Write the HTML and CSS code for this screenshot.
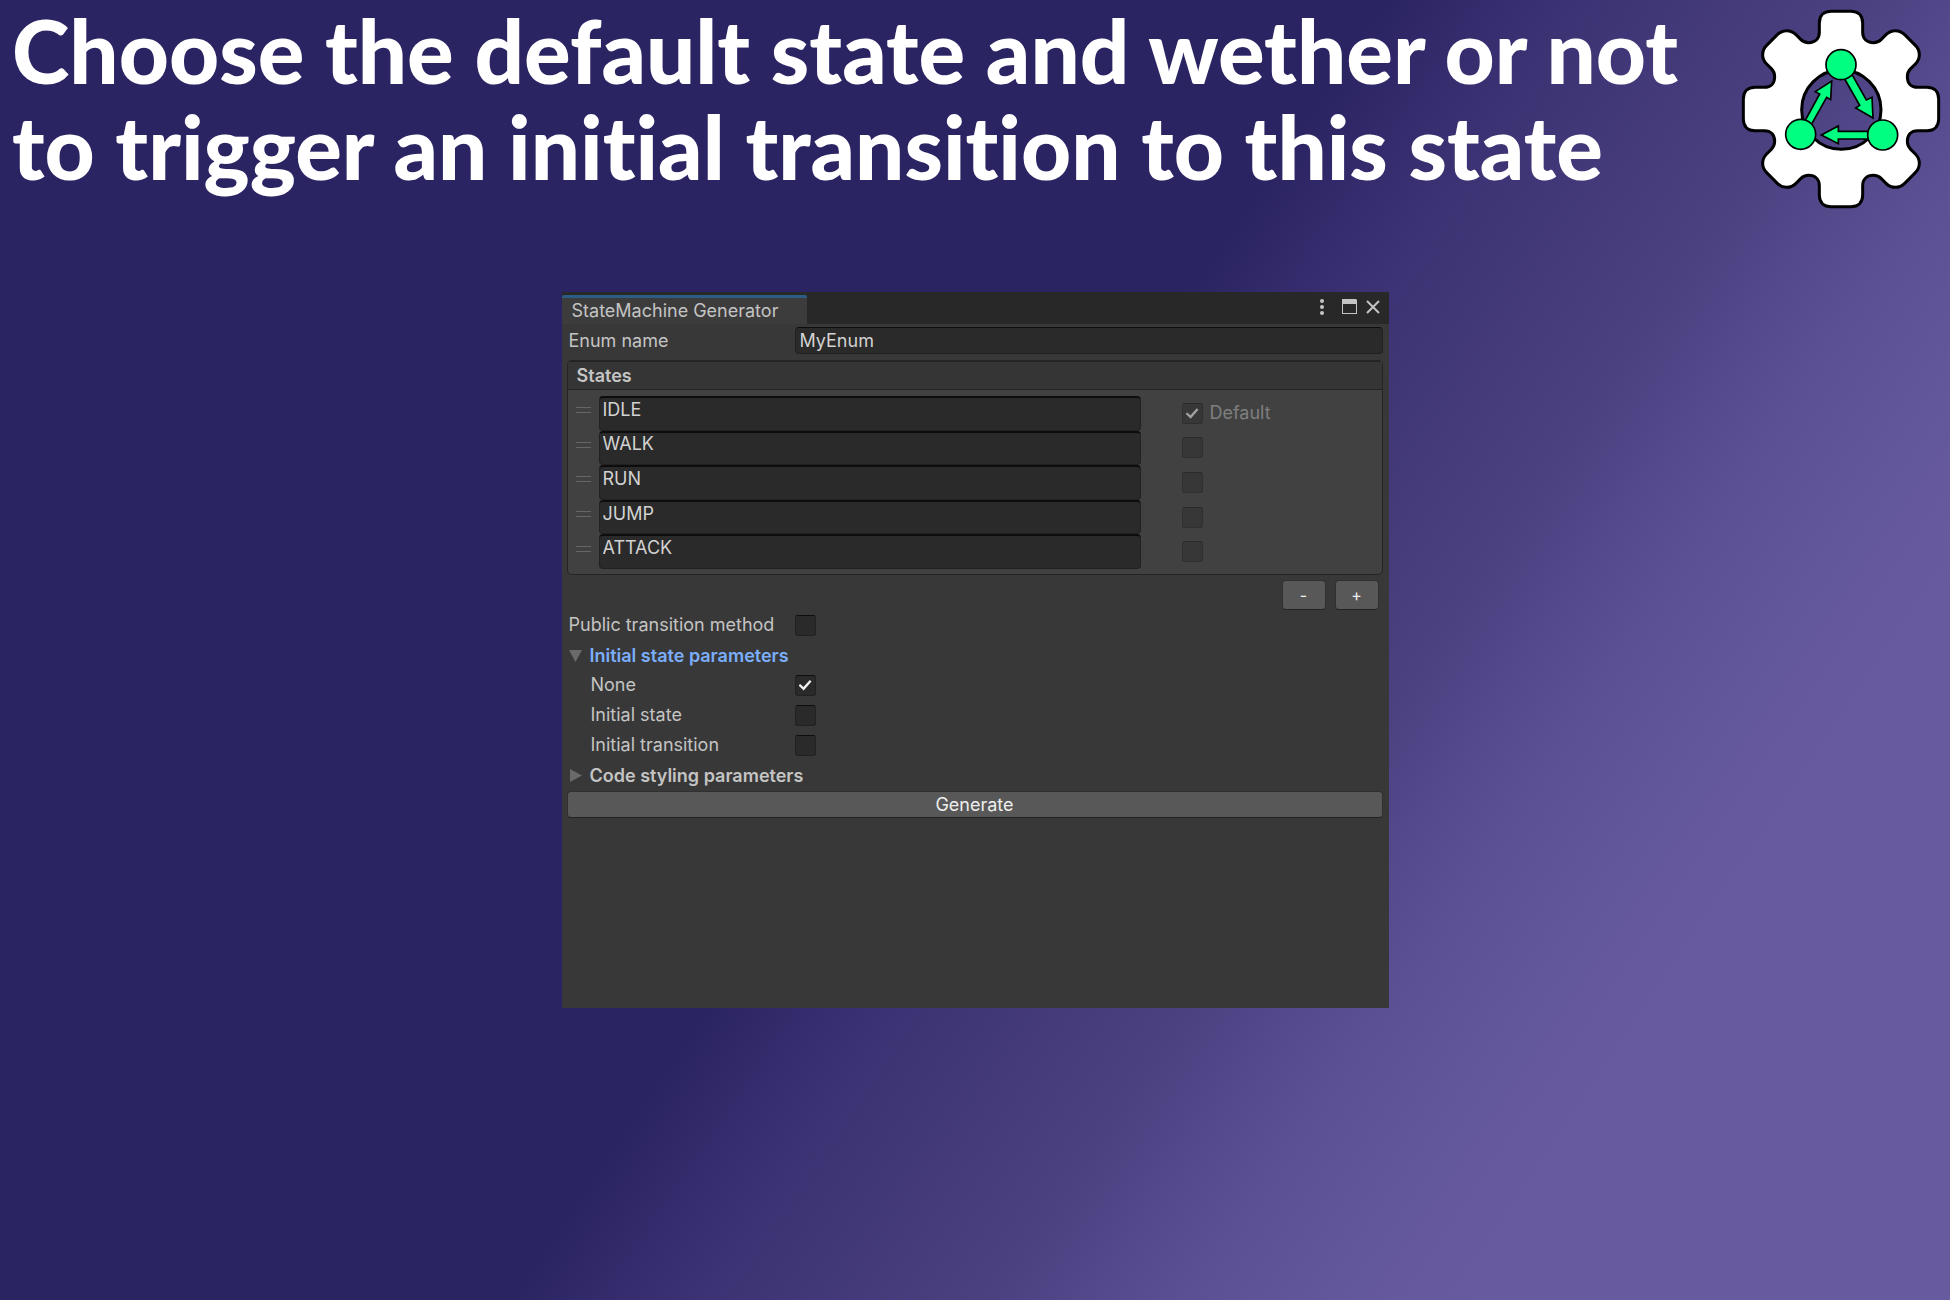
FILE: index.html
```html
<!DOCTYPE html>
<html lang="en">
<head>
<meta charset="utf-8">
<meta name="viewport" content="width=device-width, initial-scale=1">
<title>StateMachine Generator</title>
<link rel="stylesheet" href="styles.css">
</head>
<body>
<header class="banner">
  <h1 class="headline">Choose the default state and wether or not<br>to trigger an initial transition to this state</h1>
  <svg class="logo" viewBox="61 28 600 600" role="img" aria-label="State machine logo">
    <path class="gear" fill-rule="evenodd" d="M331 35h60c22 0 35 13 35 35v28c0 20 13 31 32 31c10 0 18-4 24-10l14-14c16-16 40-16 56 0l32 32c16 16 16 40 0 56l-14 14c-6 6-10 14-10 24c0 19 11 32 31 32h28c22 0 35 13 35 35v60c0 22-13 35-35 35h-28c-20 0-31 13-31 32c0 10 4 18 10 24l14 14c16 16 16 40 0 56l-32 32c-16 16-40 16-56 0l-14-14c-6-6-14-10-24-10c-19 0-32 11-32 31v28c0 22-13 35-35 35h-60c-22 0-35-13-35-35v-28c0-20-13-31-32-31c-10 0-18 4-24 10l-14 14c-16 16-40 16-56 0l-32-32c-16-16-16-40 0-56l14-14c6-6 10-14 10-24c0-19-11-32-31-32h-28c-22 0-35-13-35-35v-60c0-22 13-35 35-35h28c20 0 31-13 31-32c0-10-4-18-10-24l-14-14c-16-16-16-40 0-56l32-32c16-16 40-16 56 0l14 14c6 6 14 10 24 10c19 0 32-11 32-31v-28c0-22 13-35 35-35zM243 330a119 119 0 1 0 238 0a119 119 0 1 0-238 0z"/>
    <g class="graph">
      <path d="M372 238L395 226L437 301L454 293L457 355L405 325L417 317z"/>
      <path d="M252 365L297 283L284 276L333 244L330 300L318 293L270 378z"/>
      <path d="M446 395H353V379L302 406L353 432V418H446z"/>
      <circle cx="361" cy="195" r="45"/>
      <circle cx="240" cy="404" r="45"/>
      <circle cx="486" cy="406" r="45"/>
    </g>
  </svg>
</header>

<main class="window">
  <div class="titlebar">
    <h2 class="tab">StateMachine Generator</h2>
    <div class="window-controls">
      <button class="icon-button" type="button" aria-label="Menu"><svg width="16" height="16" viewBox="0 0 16 16"><circle cx="8" cy="2" r="2"/><circle cx="8" cy="8" r="2"/><circle cx="8" cy="14" r="2"/></svg></button>
      <button class="icon-button" type="button" aria-label="Maximize"><svg width="16" height="16" viewBox="0 0 16 16"><path fill-rule="evenodd" d="M1 0h14l1 1v14H1V0zM2 5v9h13V5z"/></svg></button>
      <button class="icon-button" type="button" aria-label="Close"><svg width="16" height="16" viewBox="0 0 16 16"><path class="cross" d="M2 2L14 14M14 2L2 14"/></svg></button>
    </div>
  </div>

  <form class="panel">
    <div class="field">
      <label class="field-label" for="enum-name">Enum name</label>
      <input class="text-input" id="enum-name" type="text" value="MyEnum">
    </div>

    <section class="states">
      <h3 class="states-title">States</h3>
      <ul class="state-list">
        <li class="state"><span class="handle"></span><input class="text-input state-input" type="text" value="IDLE" aria-label="State 1"><label class="default-toggle"><input class="check" type="checkbox" checked disabled>Default</label></li>
        <li class="state"><span class="handle"></span><input class="text-input state-input" type="text" value="WALK" aria-label="State 2"><input class="check" type="checkbox" aria-label="Default state 2" disabled></li>
        <li class="state"><span class="handle"></span><input class="text-input state-input" type="text" value="RUN" aria-label="State 3"><input class="check" type="checkbox" aria-label="Default state 3" disabled></li>
        <li class="state"><span class="handle"></span><input class="text-input state-input" type="text" value="JUMP" aria-label="State 4"><input class="check" type="checkbox" aria-label="Default state 4" disabled></li>
        <li class="state"><span class="handle"></span><input class="text-input state-input" type="text" value="ATTACK" aria-label="State 5"><input class="check" type="checkbox" aria-label="Default state 5" disabled></li>
      </ul>
    </section>

    <div class="list-actions">
      <button class="button small" type="button">-</button>
      <button class="button small" type="button">+</button>
    </div>

    <div class="field">
      <label class="field-label" for="public-method">Public transition method</label>
      <input class="check" id="public-method" type="checkbox">
    </div>

    <details class="foldout" open>
      <summary class="summary active"><svg class="arrow" width="14" height="14" viewBox="0 0 14 14"><path d="M0 1H13L6.500 13z"/></svg>Initial state parameters</summary>
      <div class="field nested">
        <label class="field-label" for="none">None</label>
        <input class="check" id="none" type="checkbox" checked>
      </div>
      <div class="field nested">
        <label class="field-label" for="initial-state">Initial state</label>
        <input class="check" id="initial-state" type="checkbox">
      </div>
      <div class="field nested">
        <label class="field-label" for="initial-transition">Initial transition</label>
        <input class="check" id="initial-transition" type="checkbox">
      </div>
    </details>

    <details class="foldout">
      <summary class="summary"><svg class="arrow" width="14" height="14" viewBox="0 0 14 14"><path d="M1 0V13L13 6.500z"/></svg>Code styling parameters</summary>
    </details>

    <button class="button generate" type="button">Generate</button>
  </form>
</main>
</body>
</html>
```
FILE: styles.css
```css
* {
  box-sizing: border-box;
}

body {
  margin: 0;
  min-height: 100vh;
  font: 18px/22px Inter, "Liberation Sans", sans-serif;
  font-optical-sizing: none;
  color: #c4c4c4;
  background: linear-gradient(124deg, #2b2463 49%, #3c3374 56%, #4b4181 66%, #5b5094 73%, #63579b 78%, #685a9e 83%);
}

.banner {
  display: flex;
  justify-content: space-between;
  align-items: flex-start;
  padding: 3px 9px 0 12px;
}

.headline {
  margin: 0;
  font: 900 87px/96px Lato, "Open Sans", sans-serif;
  font-variant-ligatures: none;
  color: #fff;
  white-space: nowrap;
}

.logo {
  flex: none;
  width: 200px;
  height: 200px;
  margin-top: 6px;
}

.gear {
  fill: #fff;
  stroke: #000;
  stroke-width: 9;
}

.graph {
  fill: #00ff80;
  stroke: #000;
  stroke-width: 5;
}

.window {
  width: 827px;
  min-height: 716px;
  margin: 83px auto 0;
  background: #383838;
}

.titlebar {
  display: flex;
  justify-content: space-between;
  height: 32px;
  padding-top: 3px;
  background: #282828;
}

.tab {
  margin: 0;
  width: 245px;
  padding: 2px 10px;
  border-top: 3px solid #2c5d87;
  border-radius: 2px 2px 0 0;
  background: #3c3c3c;
  font-size: 18px;
  font-weight: 400;
  white-space: nowrap;
}

.window-controls {
  display: flex;
  align-items: flex-start;
  gap: 8px;
  padding: 4px 8px 0 0;
}

.icon-button {
  display: block;
  width: 16px;
  height: 16px;
  padding: 0;
  border: 0;
  background: none;
  fill: #c4c4c4;
}

.icon-button:first-child {
  margin-right: 3px;
}

.icon-button svg {
  display: block;
}

.cross {
  stroke: #c4c4c4;
  stroke-width: 2;
}

.panel {
  padding: 3px 6px 0 5px;
}

.field {
  display: flex;
  align-items: center;
  height: 30px;
  padding-left: 2px;
}

.field:first-child {
  height: 27px;
}

.field-label {
  width: 226px;
}

.nested {
  padding-left: 24px;
}

.nested .field-label {
  width: 204px;
}

.text-input {
  flex: 1;
  min-width: 0;
  height: 27px;
  padding: 0 4px 1px;
  border: 1px solid #212121;
  border-top-color: #0d0d0d;
  border-radius: 4px;
  background: #2a2a2a;
  color: #d2d2d2;
  font: inherit;
}

.states {
  margin-top: 6px;
  border: 1px solid #242424;
  border-top-width: 2px;
  border-radius: 5px;
  background: #414141;
}

.states-title {
  margin: 0;
  padding: 3px 9px 2px;
  border-bottom: 1px solid #242424;
  background: #353535;
  font-size: 18px;
  line-height: 22px;
  font-weight: 600;
}

.state-list {
  display: grid;
  grid-template-rows: repeat(5, 1fr);
  height: 184px;
  margin: 0;
  padding: 6px 0 5px 8px;
  list-style: none;
}

.state {
  display: grid;
  grid-template-columns: 23px 542px 1fr;
  align-items: center;
}

.handle {
  width: 15px;
  height: 6px;
  margin-bottom: 6px;
  border-top: 1px solid #666;
  border-bottom: 1px solid #666;
}

.state-input {
  height: 100%;
  padding: 0 3px 9px;
  border-top-width: 2px;
}

.state > .check,
.default-toggle {
  margin-left: 41px;
}

.default-toggle {
  display: flex;
  align-items: center;
  gap: 7px;
  color: #7f7f7f;
}

.check {
  appearance: none;
  display: grid;
  place-items: center;
  width: 21px;
  height: 21px;
  margin: 0;
  border: 1px solid #212121;
  border-top-color: #0d0d0d;
  border-radius: 3px;
  background: #2a2a2a;
  color: #f0f0f0;
}

.check:checked::before {
  content: "";
  width: 13px;
  height: 11px;
  background: currentColor;
  clip-path: polygon(0 55%, 13% 42%, 38% 68%, 87% 5%, 100% 18%, 40% 100%);
}

.check:disabled {
  border-color: #303030;
  border-top-color: #2a2a2a;
  background: #373737;
  color: #a0a0a0;
}

.list-actions {
  display: flex;
  justify-content: flex-end;
  gap: 9px;
  padding: 5px 4px 0;
}

.button {
  padding: 0;
  border: 1px solid #303030;
  border-bottom-color: #242424;
  border-radius: 4px;
  background: #585858;
  color: #eee;
  font: inherit;
}

.small {
  width: 44px;
  height: 30px;
  font-size: 16px;
}

.summary {
  display: flex;
  align-items: center;
  gap: 7px;
  height: 30px;
  padding: 2px 0 0 2px;
  color: #c4c4c4;
  font-weight: 600;
  list-style: none;
}

.active {
  color: #7baefa;
}

.arrow {
  fill: #6a6a6a;
}

.generate {
  display: block;
  width: 100%;
  height: 27px;
  margin-top: 1px;
}
```
